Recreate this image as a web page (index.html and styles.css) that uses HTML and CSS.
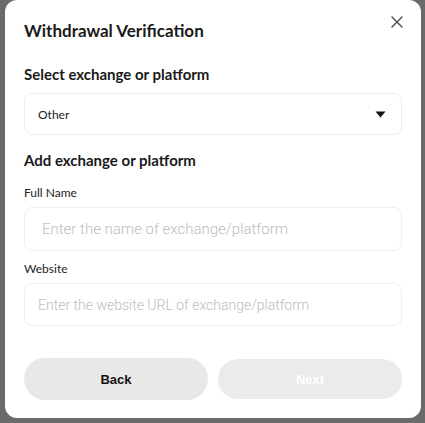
FILE: index.html
```html
<!DOCTYPE html>
<html>
<head>
<meta charset="utf-8">
<link rel="stylesheet" href="styles.css">
</head>
<body>
<div class="overlay">
  <div class="modal">
    <div class="header">
      <h1 class="title">Withdrawal Verification</h1>
      <button class="close" aria-label="Close">
        <svg width="12" height="12" viewBox="0 0 12 12"><path d="M1 1L11 11M11 1L1 11" stroke="#555" stroke-width="1.5" stroke-linecap="round"/></svg>
      </button>
    </div>
    <h2 class="section">Select exchange or platform</h2>
    <div class="select">
      <span>Other</span>
      <svg class="caret" width="11" height="7" viewBox="0 0 11 7"><path d="M0.5 0.5H10.5L5.5 6.5Z" fill="#111"/></svg>
    </div>
    <h2 class="section second">Add exchange or platform</h2>
    <label class="label">Full Name</label>
    <div class="input name"><span>Enter the name of exchange/platform</span></div>
    <label class="label">Website</label>
    <div class="input url"><span>Enter the website URL of exchange/platform</span></div>
    <div class="actions">
      <button class="btn back">Back</button>
      <button class="btn next">Next</button>
    </div>
  </div>
</div>
</body>
</html>
```
FILE: styles.css
```css
* { box-sizing: border-box; }
html, body { margin: 0; padding: 0; }
body {
  background: #6a6a6a;
  width: 425px;
  height: 423px;
  overflow: hidden;
  font-family: Lato, "Noto Sans", sans-serif;
}
.overlay {
  padding-left: 5px;
}
.modal {
  width: 416px;
  height: 418px;
  background: #fff;
  border-radius: 12px;
  padding: 0 19px 0 19px;
  display: flex;
  flex-direction: column;
}
.header {
  display: flex;
  justify-content: space-between;
  align-items: flex-start;
  padding-top: 19px;
}
.title {
  margin: 0;
  font-size: 17px;
  font-weight: 700;
  color: #1a1a1a;
  line-height: 24px;
}
.close {
  border: 0;
  background: none;
  padding: 0;
  margin-top: -3px;
  margin-right: -1px;
  width: 12px;
  height: 12px;
  display: flex;
}
.section {
  margin: 20px 0 0 0;
  font-size: 15px;
  font-weight: 700;
  color: #1a1a1a;
  line-height: 22px;
}
.section.second { margin-top: 14px; }
.select {
  margin-top: 8px;
  height: 42px;
  border: 1px solid #ededed;
  border-radius: 8px;
  display: flex;
  align-items: center;
  justify-content: space-between;
  padding: 0 15px 0 13px;
  font-size: 12px;
  color: #222;
}
.label {
  margin-top: 13px;
  font-size: 12px;
  color: #222;
  line-height: 18px;
}
.input {
  margin-top: 5px;
  height: 44px;
  border: 1px solid #efefef;
  border-radius: 8px;
  display: flex;
  align-items: center;
  color: #bdbdbd;
  font-family: Roboto, sans-serif;
  font-weight: 300;
}
.input.name { padding-left: 17px; font-size: 15px; }
.input.url { padding-left: 13px; font-size: 14px; height: 43px; }
.input + .label { margin-top: 9px; }
.actions {
  margin-top: 32px;
  display: flex;
  gap: 10px;
}
.btn {
  flex: 1;
  height: 42px;
  border: 0;
  border-radius: 21px;
  background: #e8e8e8;
  font-family: "Liberation Sans", Arial, sans-serif;
  font-weight: 700;
  font-size: 13px;
  color: #111;
}
.btn.next { color: #fff; background: #ebebeb; height: 40px; margin-top: 1px; }
```
